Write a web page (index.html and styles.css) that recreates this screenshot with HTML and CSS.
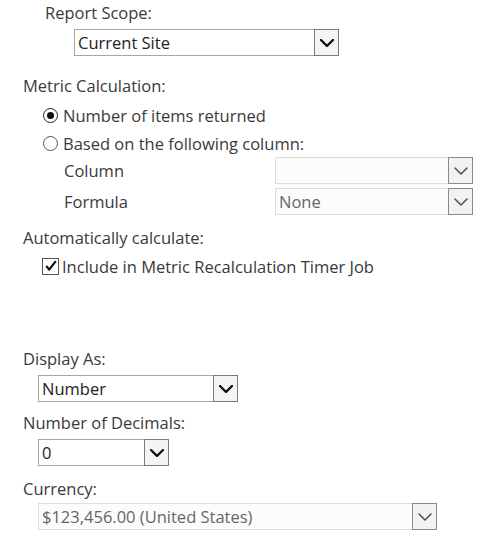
FILE: index.html
```html
<!DOCTYPE html>
<html>
<head>
<meta charset="utf-8">
<link rel="stylesheet" href="styles.css">
</head>
<body>
<div class="form">
  <div class="label l-scope">Report Scope:</div>
  <div class="select s-scope"><span class="val">Current Site</span><span class="arrow"><svg viewBox="0 0 14 8" width="14" height="8"><path d="M1 1 L7 7 L13 1" /></svg></span></div>

  <div class="label l-metric">Metric Calculation:</div>
  <div class="choice c-first"><span class="radio checked"></span><span>Number of items returned</span></div>
  <div class="choice c-second"><span class="radio"></span><span>Based on the following column:</span></div>
  <div class="field-row r-column"><span class="field-label">Column</span><div class="select disabled s-col"><span class="val"></span><span class="arrow"><svg viewBox="0 0 14 8" width="14" height="8"><path d="M1 1 L7 7 L13 1" /></svg></span></div></div>
  <div class="field-row r-formula"><span class="field-label">Formula</span><div class="select disabled s-col"><span class="val">None</span><span class="arrow"><svg viewBox="0 0 14 8" width="14" height="8"><path d="M1 1 L7 7 L13 1" /></svg></span></div></div>

  <div class="label l-auto">Automatically calculate:</div>
  <div class="choice c-check"><span class="checkbox"><svg viewBox="0 0 16 16" width="14" height="14"><path d="M2.5 8 L6 12 L13.5 2.5" /></svg></span><span>Include in Metric Recalculation Timer Job</span></div>

  <div class="label l-display">Display As:</div>
  <div class="select s-display"><span class="val">Number</span><span class="arrow"><svg viewBox="0 0 14 8" width="14" height="8"><path d="M1 1 L7 7 L13 1" /></svg></span></div>

  <div class="label l-decimals">Number of Decimals:</div>
  <div class="select s-decimals"><span class="val">0</span><span class="arrow"><svg viewBox="0 0 14 8" width="14" height="8"><path d="M1 1 L7 7 L13 1" /></svg></span></div>

  <div class="label l-currency">Currency:</div>
  <div class="select disabled s-currency"><span class="val">$123,456.00 (United States)</span><span class="arrow"><svg viewBox="0 0 14 8" width="14" height="8"><path d="M1 1 L7 7 L13 1" /></svg></span></div>
</div>
</body>
</html>
```
FILE: styles.css
```css
html, body {
  margin: 0;
  padding: 0;
  background: #ffffff;
}
body {
  font-family: "Open Sans", "Noto Sans", "Liberation Sans", sans-serif;
  font-size: 16.5px;
  color: #3a3a3a;
}
.form {
  padding-top: 3px;
  display: flex;
  flex-direction: column;
  align-items: flex-start;
}
.label {
  height: 20px;
  line-height: 20px;
  margin-left: 23px;
  white-space: nowrap;
}
.l-scope { margin-left: 45px; }
.l-metric { margin-top: 20px; }
.l-auto { margin-top: 13px; }
.l-display { margin-top: 73px; }
.l-decimals { margin-top: 11px; }
.l-currency { margin-top: 13px; }

.select {
  box-sizing: border-box;
  height: 27px;
  border: 1px solid #a6a6a6;
  background: #ffffff;
  display: flex;
  align-items: stretch;
  color: #222222;
}
.select .val {
  flex: 1;
  padding-left: 3px;
  line-height: 25px;
  white-space: nowrap;
  overflow: hidden;
}
.select .arrow {
  box-sizing: border-box;
  width: 25px;
  margin: -1px -1px -1px 0;
  border: 1px solid #7a7a7a;
  background: #f4f4f4;
  display: flex;
  align-items: center;
  justify-content: center;
}
.select .arrow svg path {
  fill: none;
  stroke: #111111;
  stroke-width: 2.4;
  stroke-linecap: round;
  stroke-linejoin: round;
}
.select.disabled {
  border-color: #dcdcdc;
  background: #fcfcfc;
  color: #666666;
}
.select.disabled .arrow {
  border-color: #8a8a8a;
  background: #f2f2f2;
}
.select.disabled .arrow svg path {
  stroke: #555555;
  stroke-width: 1.6;
}

.s-scope { margin-top: 6px; margin-left: 74px; width: 265px; }
.s-display { margin-top: 6px; margin-left: 38px; width: 200px; }
.s-decimals { margin-top: 6px; margin-left: 38px; width: 131px; }
.s-currency { margin-top: 4px; margin-left: 38px; width: 399px; }

.choice {
  height: 20px;
  margin-left: 43px;
  display: flex;
  align-items: center;
  white-space: nowrap;
}
.c-first { margin-top: 9px; }
.c-second { margin-top: 8px; }
.c-check { margin-top: 8px; margin-left: 42px; }

.radio {
  box-sizing: border-box;
  width: 15px;
  height: 15px;
  border: 1px solid #555555;
  border-radius: 50%;
  margin-right: 5px;
  display: flex;
  align-items: center;
  justify-content: center;
}
.radio.checked {
  border-color: #222222;
}
.radio.checked::after {
  content: "";
  width: 7px;
  height: 7px;
  border-radius: 50%;
  background: #111111;
}
.checkbox {
  box-sizing: border-box;
  width: 17px;
  height: 17px;
  border: 1px solid #555555;
  margin-right: 3px;
  display: flex;
  align-items: center;
  justify-content: center;
}
.checkbox svg path {
  fill: none;
  stroke: #111111;
  stroke-width: 2.4;
}

.field-row {
  display: flex;
  align-items: center;
  width: 473px;
}
.r-column { margin-top: 4px; }
.r-formula { margin-top: 4px; }
.field-label {
  width: 211px;
  margin-left: 64px;
  line-height: 20px;
}
.s-col { width: 198px; }
```
